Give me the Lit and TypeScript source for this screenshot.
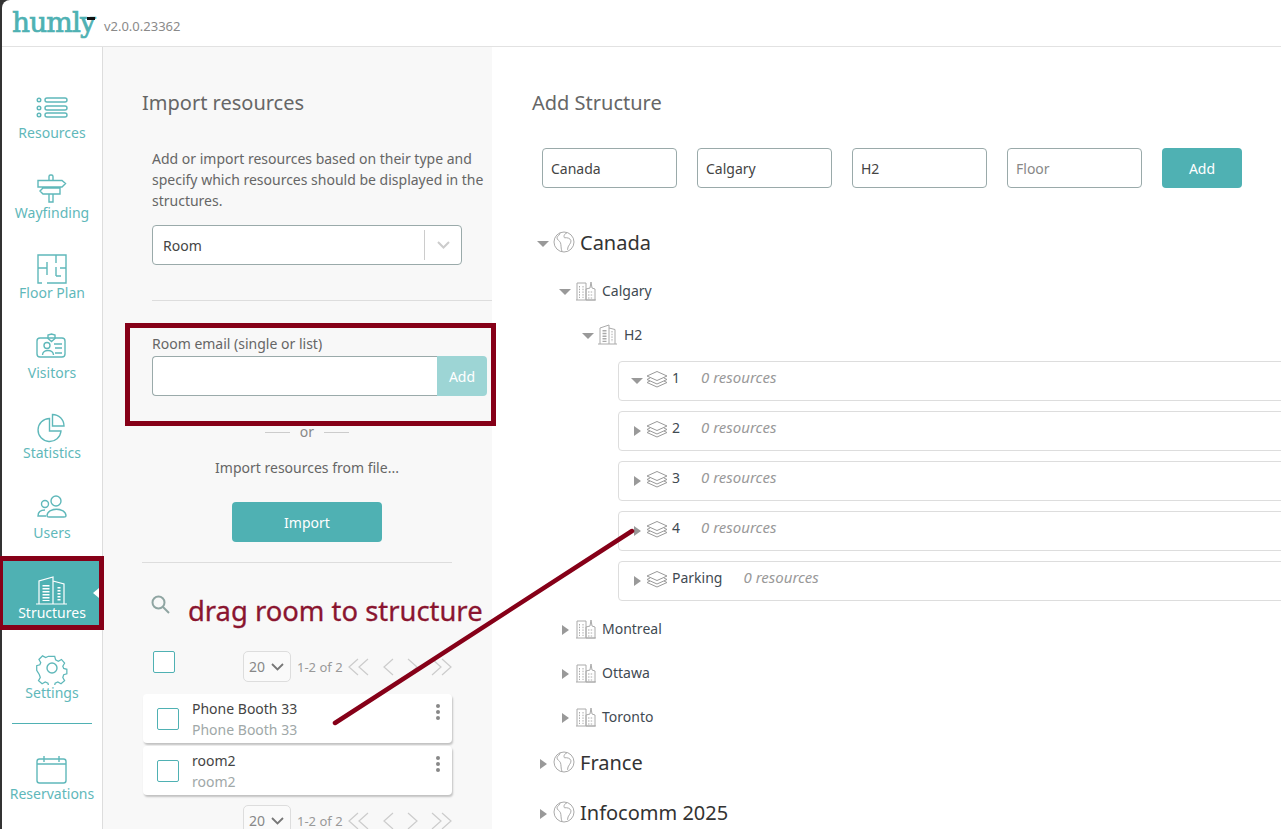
import { LitElement, html, css, svg } from "lit";
import { customElement } from "lit/decorators.js";

const navIcons: Record<string, unknown> = {
  Resources: svg`<circle cx="9" cy="7" r="1.8"/><circle cx="9" cy="15" r="1.8"/><circle cx="9" cy="22" r="1.8"/><rect x="15" y="5" width="22" height="4" rx="2"/><rect x="15" y="13" width="22" height="4" rx="2"/><rect x="15" y="20" width="22" height="4" rx="2"/>`,
  Wayfinding: svg`<path d="M19 7V3.500a1.500 1.500 0 0 1 1.500-1.500h1a1.500 1.500 0 0 1 1.500 1.500V7M19 21v8h4v-8M23 14v1M19 14v1"/><path d="M8 7.500h24l3.500 3-3.500 3.500H8zM30 15H13l-3 3 3 3h17z"/>`,
  "Floor Plan": svg`<path d="M12 30H8V2h28v28H17M8 15h9M17 9v13M26 2v8M26 14v9M26 23h5M36 15h-6"/>`,
  Visitors: svg`<rect x="7" y="5" width="28" height="19" rx="3"/><path d="M18 5V2l3.500-1L25 2v3.500l-3.500 3-3.500-3zM12.500 22c0-6 11-6 11 0M24 11h8M25 15h7M25 20h7"/><circle cx="17" cy="12.500" r="3"/>`,
  Statistics: svg`<path d="M19.500 5.500A11.500 11.500 0 1 0 31 18H19.500z"/><path d="M22.500 1.500A11.500 11.500 0 0 1 34 13H22.500z"/>`,
  Users: svg`<circle cx="26" cy="8" r="5"/><path d="M17 23c0-9 19-9 19 0 0 1-1 1-2 1H19c-1 0-2 0-2-1z"/><circle cx="15" cy="11" r="3.500"/><path d="M16 23H8c0-4 2-6 7-6"/>`,
  Structures: svg`<path d="M9 31V8l14-4v27M23 8l11 3v20M6 31h31"/><path stroke-dasharray="1.500 1.500" stroke-width="7" d="M16 12v16"/><path stroke-dasharray="1.500 1.500" stroke-width="3" d="M29 14v14"/>`,
  Settings: svg`<circle cx="22" cy="15" r="5"/><path d="M19 2h6l1 4 3 1.500 3.500-2 3.500 4-2 3.500 1 2.500 3.500 1v5l-3.500 1-1 3 2 3.500-4 3.500-3.500-2-3 1.500-1 4h-6l-1-4-3-1.500-3.500 2-4-3.500 2-3.500-1-3L5 17.500v-5l3.500-1 1-2.500-2-3.500 4-4 3.500 2 3-1.500z" transform="translate(2.200 1.500) scale(.9)"/>`,
  Reservations: svg`<rect x="7" y="5" width="29" height="24" rx="2.500"/><path d="M7 10h29M14 2v6M29 2v6"/>`,
};

const globe = svg`<circle cx="11" cy="11" r="10"/><path d="M7 1.800c.5 2-2.500 2.700-3 5-.3 2 2.500 2.500 3.500 5 .8 2 .2 6 1.500 8.500M14 1.800c-3 1.200-3.500 3.500-2.500 5 2.500-.5 6 .5 6.500 3 .3 3-3.500 4.500-3.500 9"/>`;
const city = svg`<path d="M1 20V3h9v17M10 20V9l4-1 1-6 1 6 3 1v11zM0 20h20"/><path stroke-dasharray="1.500 1.200" d="M3.500 6v12M7 6v12M12 12h5.500M12 15h5.500M12 18h5.500"/>`;
const bldg = svg`<path d="M2 20V4l9-3v19M11 4l6 1.500V20M0 20h19"/><path stroke-dasharray="1.500 1.200" stroke-width="4" d="M6.500 6v12"/><path stroke-dasharray="1.500 1.200" d="M14 7v11"/>`;
const layers = svg`<path d="M10 .5l10 4.500-10 4.500L0 5zM3 7L0 8.500l10 4.500 10-4.500-3-1.500M3 10L0 11.500l10 4.500 10-4.500-3-1.500"/>`;

@customElement("app-root")
export class AppRoot extends LitElement {
  static styles = css`
    :host { display: block; width: 1281px; height: 829px; overflow: hidden; position: relative; background: #333; font-family: "Noto Sans", sans-serif; color: #666; font-size: 14px; }
    .shell { margin-left: 2px; height: 829px; background: #fff; border-top-left-radius: 8px; display: flex; flex-direction: column; overflow: hidden; }
    .top { height: 46px; border-bottom: 1px solid #e2e2e2; flex: none; display: flex; align-items: center; padding-left: 10px; position: relative; }
    .logo { font-family: "DejaVu Serif", serif; font-size: 28px; color: #4fb1b3; letter-spacing: -.9px; line-height: 46px; position: relative; top: 0; -webkit-text-stroke: .7px #4fb1b3; }
    .dash { position: absolute; left: 85px; top: 17px; width: 8px; height: 3px; background: #111; }
    .ver { margin-left: 9px; font-size: 13px; color: #8a8a8a; position: relative; top: 3px; }
    .body { flex: 1; display: flex; min-height: 0; }
    .side { width: 100px; flex: none; border-right: 1px solid #ddd; padding-top: 40px; box-sizing: content-box; }
    .nav { height: 80px; padding-top: 6px; box-sizing: border-box; display: flex; flex-direction: column; align-items: center; color: #5fb8ba; position: relative; }
    .nav svg { width: 44px; height: 32px; fill: none; stroke: #5fb8ba; stroke-width: 1.4; display: block; margin-bottom: -2px; }
    .nav span { line-height: 20px; }
    .nav.settings { height: 76px; }
    .nav.active { background: #4fb1b3; color: #fff; height: 64px; margin: -6px 3px 22px 1px; padding: 12px 0 0 2px; }
    .nav.active svg { stroke: #fff; stroke-width: 1.2; }
    .caret { position: absolute; right: 0; top: 27px; width: 0; height: 0; border: 5px solid transparent; border-right: 6px solid #fff; border-left: 0; }
    .rule { height: 1px; background: #4fb1b3; margin: 0 10px 24px 10px; }
    .left { width: 350px; flex: none; background: #f8f8f8; padding: 42px 0 0 39px; }
    h2 { margin: 0; font-weight: 400; font-size: 20px; line-height: 28px; color: #666; }
    .para { margin: 31px 0 0 10px; line-height: 21px; width: 340px; }
    .field { box-sizing: border-box; border: 1px solid #9aaaaa; border-radius: 4px; background: #fff; height: 40px; }
    .select { margin: 14px 0 0 10px; width: 310px; display: flex; align-items: center; padding-left: 10px; color: #444; }
    .select span { flex: 1; }
    .sep { width: 1px; height: 30px; background: #ccc; }
    .chev { width: 36px; display: flex; justify-content: center; }
    .chev svg { width: 13px; height: 8px; fill: none; stroke: #ccc; stroke-width: 2; }
    .hr1 { height: 1px; background: #ddd; margin: 35px 0 0 10px; }
    .lab { margin: 33px 0 2px 10px; line-height: 20px; }
    .inp { margin-left: 10px; display: flex; height: 40px; width: 335px; }
    .inp .field { flex: 1; border-right: 0; border-radius: 4px 0 0 4px; }
    .inp .addx { width: 50px; background: #9dd5d5; color: #fff; display: flex; align-items: center; justify-content: center; border-radius: 0 4px 4px 0; }
    .or { margin: 26px 0 0 0; width: 330px; display: flex; justify-content: center; align-items: center; gap: 10px; line-height: 20px; color: #888; }
    .or i { width: 25px; height: 1px; background: #ccc; }
    .fromfile { margin-top: 16px; width: 330px; text-align: center; line-height: 20px; }
    .btn { background: #4fb1b3; color: #fff; border-radius: 4px; display: flex; align-items: center; justify-content: center; height: 40px; }
    .imp { margin: 24px 0 0 90px; width: 150px; }
    .hr2 { height: 1px; background: #ddd; margin-top: 20px; width: 310px; }
    .search { margin: 31px 0 0 8px; height: 28px; }
    .search svg { width: 22px; height: 22px; fill: none; stroke: #8fa5a2; stroke-width: 2; display: block; margin-top: 5px; }
    .ckrow { margin: 29px 0 0 0; display: flex; height: 31px; align-items: flex-start; }
    .cb { box-sizing: border-box; width: 22px; height: 22px; border: 1px solid #4fb1b3; border-radius: 2px; background: #fff; flex: none; }
    .ckrow .cb { margin: 0 68px 0 11px; }
    .pager { display: flex; align-items: center; height: 31px; font-size: 13px; color: #999; }
    .pgsel { box-sizing: border-box; width: 48px; height: 31px; border: 1px solid #ddd; border-radius: 5px; display: flex; align-items: center; padding-left: 5px; font-size: 14px; color: #888; gap: 6px; background: #fafafa; margin-right: 6px; }
    .pgsel svg { width: 13px; height: 8px; fill: none; stroke: #777; stroke-width: 1.8; }
    .pgarrows { width: 106px; height: 18px; fill: none; stroke: #ccc; stroke-width: 1.2; margin-left: 5px; }
    .card { box-sizing: border-box; width: 309px; height: 49px; margin: 0 0 3px 1px; background: #fff; border-radius: 4px; box-shadow: 1px 2px 2px rgba(0,0,0,.22); display: flex; align-items: center; padding-left: 14px; position: relative; }
    .cards { margin-top: 12px; }
    .card .txt { margin-left: 13px; line-height: 21px; color: #444; }
    .card .txt div + div { color: #a0a8a8; }
    .kebab { position: absolute; right: 12px; top: 10px; display: flex; flex-direction: column; gap: 2px; }
    .kebab i { width: 4px; height: 4px; background: #888; border-radius: 50%; }
    .pager.b { margin: 10px 0 0 101px; }
    .right { flex: 1; min-width: 0; padding: 42px 0 0 40px; overflow: hidden; color: #444; }
    .form { margin: 31px 0 0 10px; display: flex; gap: 20px; }
    .form .field { width: 135px; padding: 0 8px; display: flex; align-items: center; color: #444; }
    .form .ph { color: #888; }
    .form .btn { width: 80px; }
    .tree { margin-top: 32px; }
    .row { display: flex; align-items: center; height: 44px; color: #3f4a52; }
    .row .t { width: 12px; flex: none; display: flex; justify-content: center; position: relative; top: 2px; }
    .tri-d { width: 0; height: 0; border: 6px solid transparent; border-top: 6px solid #999; border-bottom: 0; }
    .tri-r { width: 0; height: 0; border: 5.5px solid transparent; border-left: 7px solid #999; border-right: 0; margin-left: 1px; }
    .row svg { fill: none; stroke: #aaa; stroke-width: 1; flex: none; }
    .l0 { font-size: 20px; margin-left: 5px; color: #333; }
    .l0 svg { width: 22px; height: 22px; margin: 0 5px 0 4px; }
    .l1 { margin-left: 27px; }
    .l1 svg { width: 20px; height: 21px; margin: 0 6px 0 5px; }
    .l2 { margin-left: 50px; }
    .l2 svg { width: 19px; height: 21px; margin: 0 7px 0 4px; }
    .floors { display: flex; flex-direction: column; gap: 10px; margin-top: 5px; }
    .floor { box-sizing: border-box; height: 40px; margin: 0 -10px 0 86px; border: 1px solid #ddd; border-radius: 4px; display: flex; align-items: center; padding-left: 13px; color: #3f4a52; padding-bottom: 7px; }
    .floor svg { width: 20px; height: 17px; fill: none; stroke: #999; stroke-width: 1; margin: 0 5px 0 5px; position: relative; top: 2px; }
    .floor .tb { width: 10px; display: flex; justify-content: center; position: relative; top: 3px; }
    .floor em { color: #999; margin-left: 21px; font-size: 15px; position: relative; top: -1px; }
    .floor .t { min-width: 8px; }
    .gap4 { margin-top: 4px; }
    .gap5 { margin-top: 5px; }
    .gap6 { margin-top: 6px; }
    .gap2 { margin-top: 2px; }
    .overlay { position: absolute; inset: 0; pointer-events: none; }
    .box { position: absolute; box-sizing: border-box; border: 5px solid #860018; }
    .b1 { left: 125px; top: 323px; width: 371px; height: 103px; }
    .b2 { left: -2px; top: 556px; width: 106px; height: 74px; }
    .note { position: absolute; left: 188px; top: 591px; font-size: 27.4px; line-height: 40px; color: #8a1530; white-space: nowrap; -webkit-text-stroke: .3px #8a1530; }
    .arrow { position: absolute; left: 0; top: 0; width: 1281px; height: 829px; }
  `;

  private pager(cls = "") {
    return html`<div class="pager ${cls}">
      <div class="pgsel">20 <svg viewBox="0 0 13 8"><path d="M1 1l5.500 5.500L12 1"/></svg></div>
      1-2 of 2
      <svg class="pgarrows" viewBox="0 0 106 18"><path d="M10 1L1 9l9 8M20 1l-9 8 9 8M45 1l-9 8 9 8M60 1l9 8-9 8M84 1l9 8-9 8M94 1l9 8-9 8"/></svg>
    </div>`;
  }

  private card(a: string) {
    return html`<div class="card"><div class="cb"></div><div class="txt"><div>${a}</div><div>${a}</div></div><div class="kebab"><i></i><i></i><i></i></div></div>`;
  }

  private floor(n: string, open = false) {
    return html`<div class="floor"><div class="tb"><div class="${open ? "tri-d" : "tri-r"}"></div></div><svg viewBox="0 0 20 17">${layers}</svg><span class="t">${n}</span><em>0 resources</em></div>`;
  }

  private nav(n: string) {
    const c = n === "Structures" ? "active" : n === "Settings" ? "settings" : "";
    return html`<div class="nav ${c}"><svg viewBox="0 0 44 32">${navIcons[n]}</svg><span>${n}</span>${c === "active" ? html`<div class="caret"></div>` : ""}</div>`;
  }

  private node(cls: string, icon: unknown, vb: string, label: string, open: boolean, extra = "") {
    return html`<div class="row ${cls} ${extra}"><div class="t"><div class="${open ? "tri-d" : "tri-r"}"></div></div><svg viewBox="${vb}">${icon}</svg><span>${label}</span></div>`;
  }

  render() {
    return html`<div class="shell">
      <div class="top"><span class="logo">humly</span><div class="dash"></div><span class="ver">v2.0.0.23362</span></div>
      <div class="body">
        <div class="side">
          ${["Resources", "Wayfinding", "Floor Plan", "Visitors", "Statistics", "Users", "Structures", "Settings"].map((n) => this.nav(n))}
          <div class="rule"></div>
          ${this.nav("Reservations")}
        </div>
        <div class="left">
          <h2>Import resources</h2>
          <div class="para">Add or import resources based on their type and specify which resources should be displayed in the structures.</div>
          <div class="field select"><span>Room</span><div class="sep"></div><div class="chev"><svg viewBox="0 0 13 8"><path d="M1 1l5.500 5.500L12 1"/></svg></div></div>
          <div class="hr1"></div>
          <div class="lab">Room email (single or list)</div>
          <div class="inp"><div class="field"></div><div class="addx">Add</div></div>
          <div class="or"><i></i>or<i></i></div>
          <div class="fromfile">Import resources from file...</div>
          <div class="btn imp">Import</div>
          <div class="hr2"></div>
          <div class="search"><svg viewBox="0 0 22 22"><circle cx="8.500" cy="8.500" r="6"/><path d="M13 13l6 6"/></svg></div>
          <div class="ckrow"><div class="cb"></div>${this.pager()}</div>
          <div class="cards">${this.card("Phone Booth 33")}${this.card("room2")}</div>
          ${this.pager("b")}
        </div>
        <div class="right">
          <h2>Add Structure</h2>
          <div class="form">
            <div class="field">Canada</div><div class="field">Calgary</div><div class="field">H2</div><div class="field ph">Floor</div>
            <div class="btn">Add</div>
          </div>
          <div class="tree">
            ${this.node("l0", globe, "0 0 22 22", "Canada", true)}
            ${this.node("l1", city, "0 0 20 21", "Calgary", true, "gap4")}
            ${this.node("l2", bldg, "0 0 19 21", "H2", true)}
            <div class="floors">${this.floor("1", true)}${this.floor("2")}${this.floor("3")}${this.floor("4")}${this.floor("Parking")}</div>
            ${this.node("l1", city, "0 0 20 21", "Montreal", false, "gap5")}
            ${this.node("l1", city, "0 0 20 21", "Ottawa", false)}
            ${this.node("l1", city, "0 0 20 21", "Toronto", false)}
            ${this.node("l0", globe, "0 0 22 22", "France", false, "gap2")}
            ${this.node("l0", globe, "0 0 22 22", "Infocomm 2025", false, "gap6")}
          </div>
        </div>
      </div>
    </div>
    <div class="overlay">
      <div class="box b1"></div>
      <div class="box b2"></div>
      <div class="note">drag room to structure</div>
      <svg class="arrow" viewBox="0 0 1281 829"><path d="M335 723L632 531" stroke="#860018" stroke-width="4.500" stroke-linecap="round" fill="none"/></svg>
    </div>`;
  }
}
